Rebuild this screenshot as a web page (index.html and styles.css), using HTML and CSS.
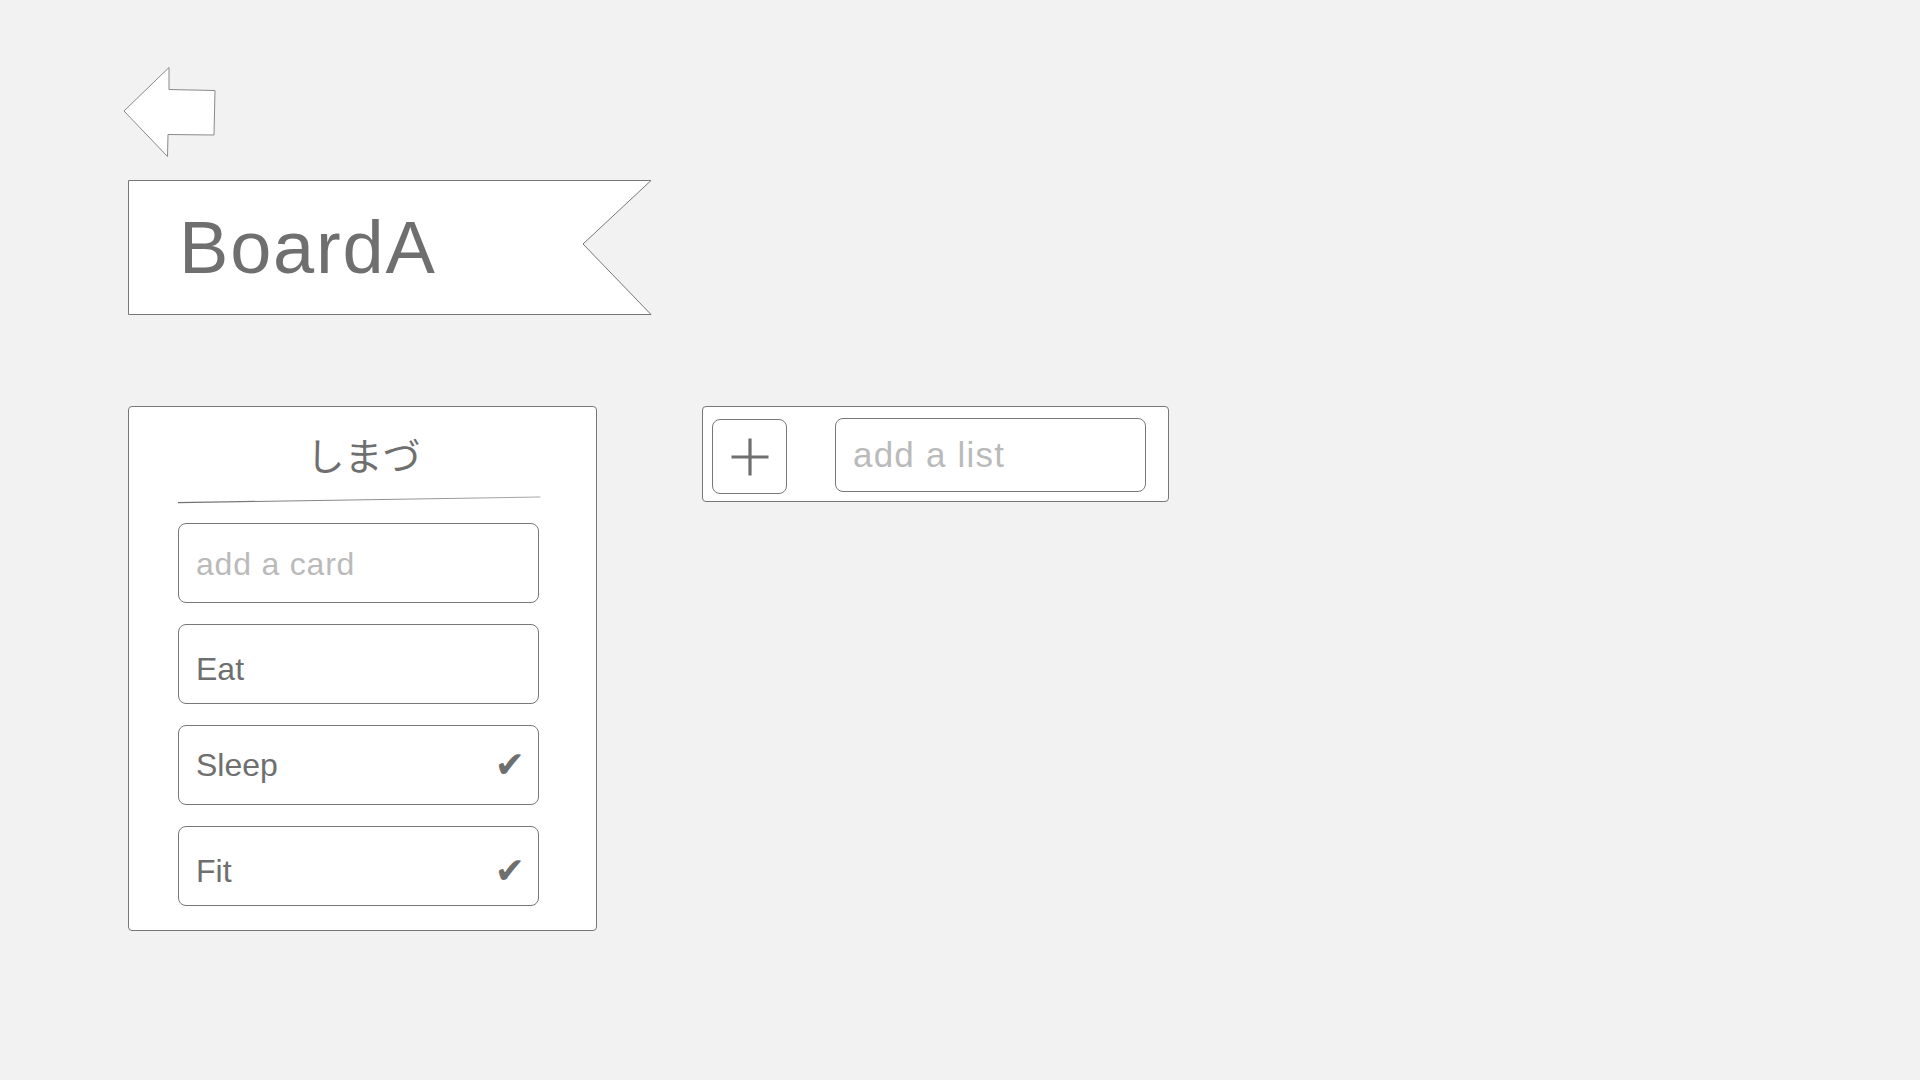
FILE: index.html
```html
<!DOCTYPE html>
<html lang="ja">
<head>
<meta charset="utf-8">
<title>BoardA</title>
<link rel="stylesheet" href="styles.css">
</head>
<body>
<div class="page">
  <svg class="back" width="100" height="100" viewBox="120 60 100 100" aria-label="back">
    <polygon points="124,111 169,67.5 169,89.5 215,90.5 214,135 168,134.5 167.5,156.5" fill="#ffffff" stroke="#8a8a8a" stroke-width="1"/>
  </svg>

  <div class="banner">
    <svg class="banner-shape" width="524" height="136" viewBox="0 0 524 136">
      <polygon points="0.5,0.5 523,0.5 455,64 523,134.5 0.5,134.5" fill="#ffffff" stroke="#777777" stroke-width="1"/>
    </svg>
    <h1 class="board-title">BoardA</h1>
  </div>

  <div class="board">
    <section class="list">
      <h2 class="list-title">しまづ</h2>
      <div class="list-body">
        <svg class="underline" width="363" height="10" viewBox="0 0 363 10">
          <defs>
            <linearGradient id="ul" x1="0" y1="0" x2="1" y2="0">
              <stop offset="0" stop-color="#707070"/>
              <stop offset="1" stop-color="#a8a8a8"/>
            </linearGradient>
          </defs>
          <line x1="0" y1="7.7" x2="362.4" y2="2" stroke="url(#ul)" stroke-width="1.2"/>
        </svg>
        <div class="cards">
          <div class="card card-input"><span class="placeholder">add a card</span></div>
          <div class="card card-low"><span class="card-text">Eat</span></div>
          <div class="card"><span class="card-text">Sleep</span><span class="check">✔</span></div>
          <div class="card card-low"><span class="card-text">Fit</span><span class="check">✔</span></div>
        </div>
      </div>
    </section>

    <div class="add-list">
      <div class="add-btn">
        <svg width="38" height="38" viewBox="0 0 38 38">
          <line x1="0.5" y1="19" x2="37.5" y2="19" stroke="#6f6f6f" stroke-width="3.2"/>
          <line x1="19" y1="0.5" x2="19" y2="37.5" stroke="#6f6f6f" stroke-width="3.2"/>
        </svg>
      </div>
      <div class="add-input"><span class="placeholder list-placeholder">add a list</span></div>
    </div>
  </div>
</div>
</body>
</html>
```

FILE: styles.css
```css
* {
  box-sizing: border-box;
}

html, body {
  margin: 0;
  padding: 0;
}

body {
  background: #f2f2f2;
  font-family: "Liberation Sans", Arial, "Noto Sans CJK JP", sans-serif;
  color: #6f6f6f;
  width: 1920px;
  height: 1080px;
  overflow: hidden;
}

.page {
  padding: 60px 0 0 120px;
  display: flex;
  flex-direction: column;
  align-items: flex-start;
}

.back {
  display: block;
}

.banner {
  position: relative;
  margin: 20px 0 0 8px;
  width: 524px;
  height: 135px;
  display: flex;
  align-items: center;
}

.banner-shape {
  position: absolute;
  left: 0;
  top: 0;
}

.board-title {
  position: relative;
  margin: 0 0 0 51px;
  font-size: 74px;
  font-weight: normal;
  letter-spacing: 1.8px;
  line-height: 1;
  color: #6f6f6f;
}

.board {
  margin: 91px 0 0 8px;
  display: flex;
  align-items: flex-start;
  gap: 105px;
}

.list {
  width: 469px;
  background: #ffffff;
  border: 1px solid #777777;
  border-radius: 4px;
  padding: 28px 0 24px 0;
}

.list-title {
  margin: 0;
  padding-left: 2px;
  text-align: center;
  font-family: "Noto Sans CJK JP", sans-serif;
  font-weight: normal;
  font-size: 38px;
  line-height: 38px;
  color: #6f6f6f;
}

.list-body {
  padding-left: 49px;
}

.underline {
  display: block;
  margin-top: 22px;
}

.cards {
  margin-top: 18px;
  display: flex;
  flex-direction: column;
  gap: 21px;
}

.card {
  width: 361px;
  height: 80px;
  border: 1px solid #777777;
  border-radius: 8px;
  background: #ffffff;
  display: flex;
  align-items: center;
  justify-content: space-between;
  padding: 0 13px 0 17px;
}

.card-input {
  padding-top: 3px;
}

.card-low {
  padding-top: 10px;
}

.card-text {
  font-size: 32px;
  color: #6f6f6f;
}

.placeholder {
  font-size: 32px;
  letter-spacing: 0.8px;
  color: #bababa;
}

.check {
  font-family: "DejaVu Sans", sans-serif;
  font-size: 36px;
  color: #6f6f6f;
  line-height: 1;
}

.add-list {
  width: 467px;
  height: 96px;
  background: #ffffff;
  border: 1px solid #777777;
  border-radius: 4px;
  display: flex;
  align-items: flex-start;
}

.add-btn {
  margin: 12px 0 0 9px;
  width: 75px;
  height: 75px;
  border: 1px solid #777777;
  border-radius: 8px;
  display: flex;
  align-items: center;
  justify-content: center;
}

.add-btn svg {
  display: block;
}

.add-input {
  margin: 11px 0 0 48px;
  width: 311px;
  height: 74px;
  border: 1px solid #777777;
  border-radius: 8px;
  display: flex;
  align-items: center;
  padding-left: 17px;
}

.list-placeholder {
  font-size: 35px;
  letter-spacing: 1.2px;
}
```
